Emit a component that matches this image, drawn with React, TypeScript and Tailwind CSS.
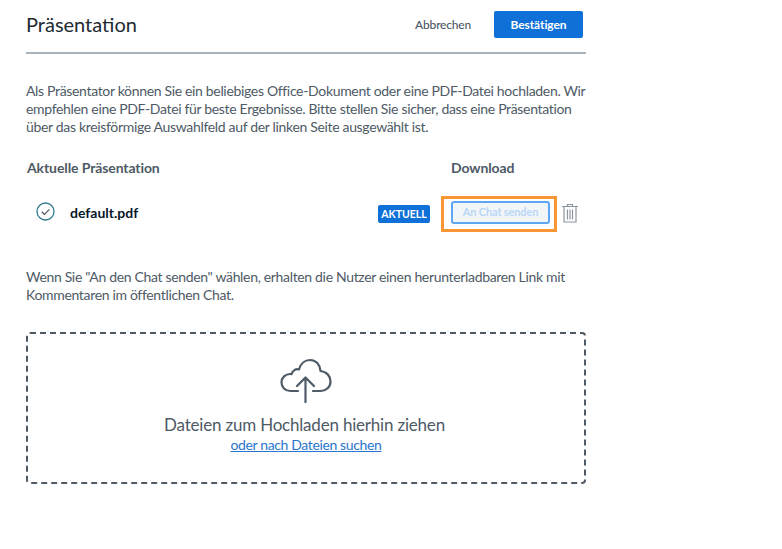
const App = () => {
  return (
    <div className="min-h-screen bg-white font-['Lato',sans-serif] text-[#4e5a66]">
      <div className="ml-[26px] w-[560px] pt-[11px]">
        {/* header */}
        <div className="flex h-[43px] items-start justify-between border-b-2 border-[#a7b3bd]">
          <h1 className="text-[20px] leading-[27px] text-[#222a31]">Präsentation</h1>
          <div className="flex items-center pr-[3px]">
            <button className="mr-[23px] text-[12px] font-medium tracking-[-0.2px] text-[#4e5a66]">Abbrechen</button>
            <button className="h-[27px] w-[89px] rounded-[2px] bg-[#0f70d7] text-[12px] font-bold tracking-[-0.1px] text-white">Bestätigen</button>
          </div>
        </div>

        <p className="mt-[28px] whitespace-nowrap text-[14px] leading-[18px] tracking-[-0.33px]">
          Als Präsentator können Sie ein beliebiges Office-Dokument oder eine PDF-Datei hochladen. Wir
          <br />
          empfehlen eine PDF-Datei für beste Ergebnisse. Bitte stellen Sie sicher, dass eine Präsentation
          <br />
          über das kreisförmige Auswahlfeld auf der linken Seite ausgewählt ist.
        </p>

        {/* table */}
        <div className="mt-[23px] flex text-[14px] font-bold leading-[18px] tracking-[-0.1px]">
          <div className="ml-px w-[424px]">Aktuelle Präsentation</div>
          <div>Download</div>
        </div>
        <div className="mt-[16px] flex h-[38px] items-center">
          <svg className="mb-[2px] ml-[10px] h-[19px] w-[19px]" viewBox="0 0 19 19" fill="none">
            <circle cx="9.5" cy="9.5" r="8.5" stroke="#2f7a8c" strokeWidth="1.3" />
            <path d="M5.8 9.8l2.6 2.5 5-5" stroke="#4e5a66" strokeWidth="1.2" />
          </svg>
          <span className="ml-[15px] w-[308px] text-[14px] font-bold text-[#06172a]">default.pdf</span>
          <span className="mt-[4px] flex h-[18px] w-[52px] items-center justify-center rounded-[2px] bg-[#0f70d7] text-[10.5px] font-bold leading-[18px] text-white">AKTUELL</span>
          <div className="mt-[4px] ml-[11px] flex h-[36px] w-[116px] items-center justify-center border-[3px] border-[#f79632] pb-[3px] pl-[3px]">
            <button className="h-[23px] w-[99px] rounded-[3px] border-2 border-[#5ea6f3] bg-[#f3f6f9] text-[11px] font-bold tracking-[-0.15px] text-[#b9d6f6]">An Chat senden</button>
          </div>
          <svg className="mt-[1px] ml-[4px] h-[20px] w-[18px]" viewBox="0 0 18 20" fill="none" stroke="#8b96a0" strokeWidth="1.2">
            <path d="M1 3.5h16M6.5 3.5V1.5h5v2M3 3.5V19h12V3.5M6.5 6.5V16.5M9 6.5V16.5M11.5 6.5V16.5" />
          </svg>
        </div>

        <p className="mt-[37px] whitespace-nowrap text-[14px] leading-[18px] tracking-[-0.33px]">
          Wenn Sie "An den Chat senden" wählen, erhalten die Nutzer einen herunterladbaren Link mit
          <br />
          Kommentaren im öffentlichen Chat.
        </p>

        {/* dropzone */}
        <div className="mt-[28px] flex h-[152px] flex-col items-center rounded-[4px] border-2 border-dashed border-[#4e5a66]">
          <svg className="mt-[24px] h-[45px] w-[52px]" viewBox="0 0 52 45" fill="none" stroke="#4e5a66" strokeWidth="2.2" strokeLinecap="round" strokeLinejoin="round">
            <path d="M18 33H10.5C5 33 1.5 29 1.5 24.5C1.5 19.5 5.5 16 10 16C10.5 16 11 16 11.5 16.2C12.5 12.5 16 10.5 19 11.5C20.5 5.5 25 2 30 2C36 2 40 6.5 40.5 13C46.5 13.5 50.5 18 50.5 23.5C50.5 29 46 33 41 33H33" />
            <path d="M25.5 44V19.5M17 28L25.5 19.5L34 28" />
          </svg>
          <div className="mt-[11px] mr-[3px] text-[17px] leading-[22px] tracking-[-0.2px]">Dateien zum Hochladen hierhin ziehen</div>
          <a href="#" className="text-[14px] leading-[18px] tracking-[-0.37px] text-[#2a76cf] underline">oder nach Dateien suchen</a>
        </div>
      </div>
    </div>
  );
};

export default App;
